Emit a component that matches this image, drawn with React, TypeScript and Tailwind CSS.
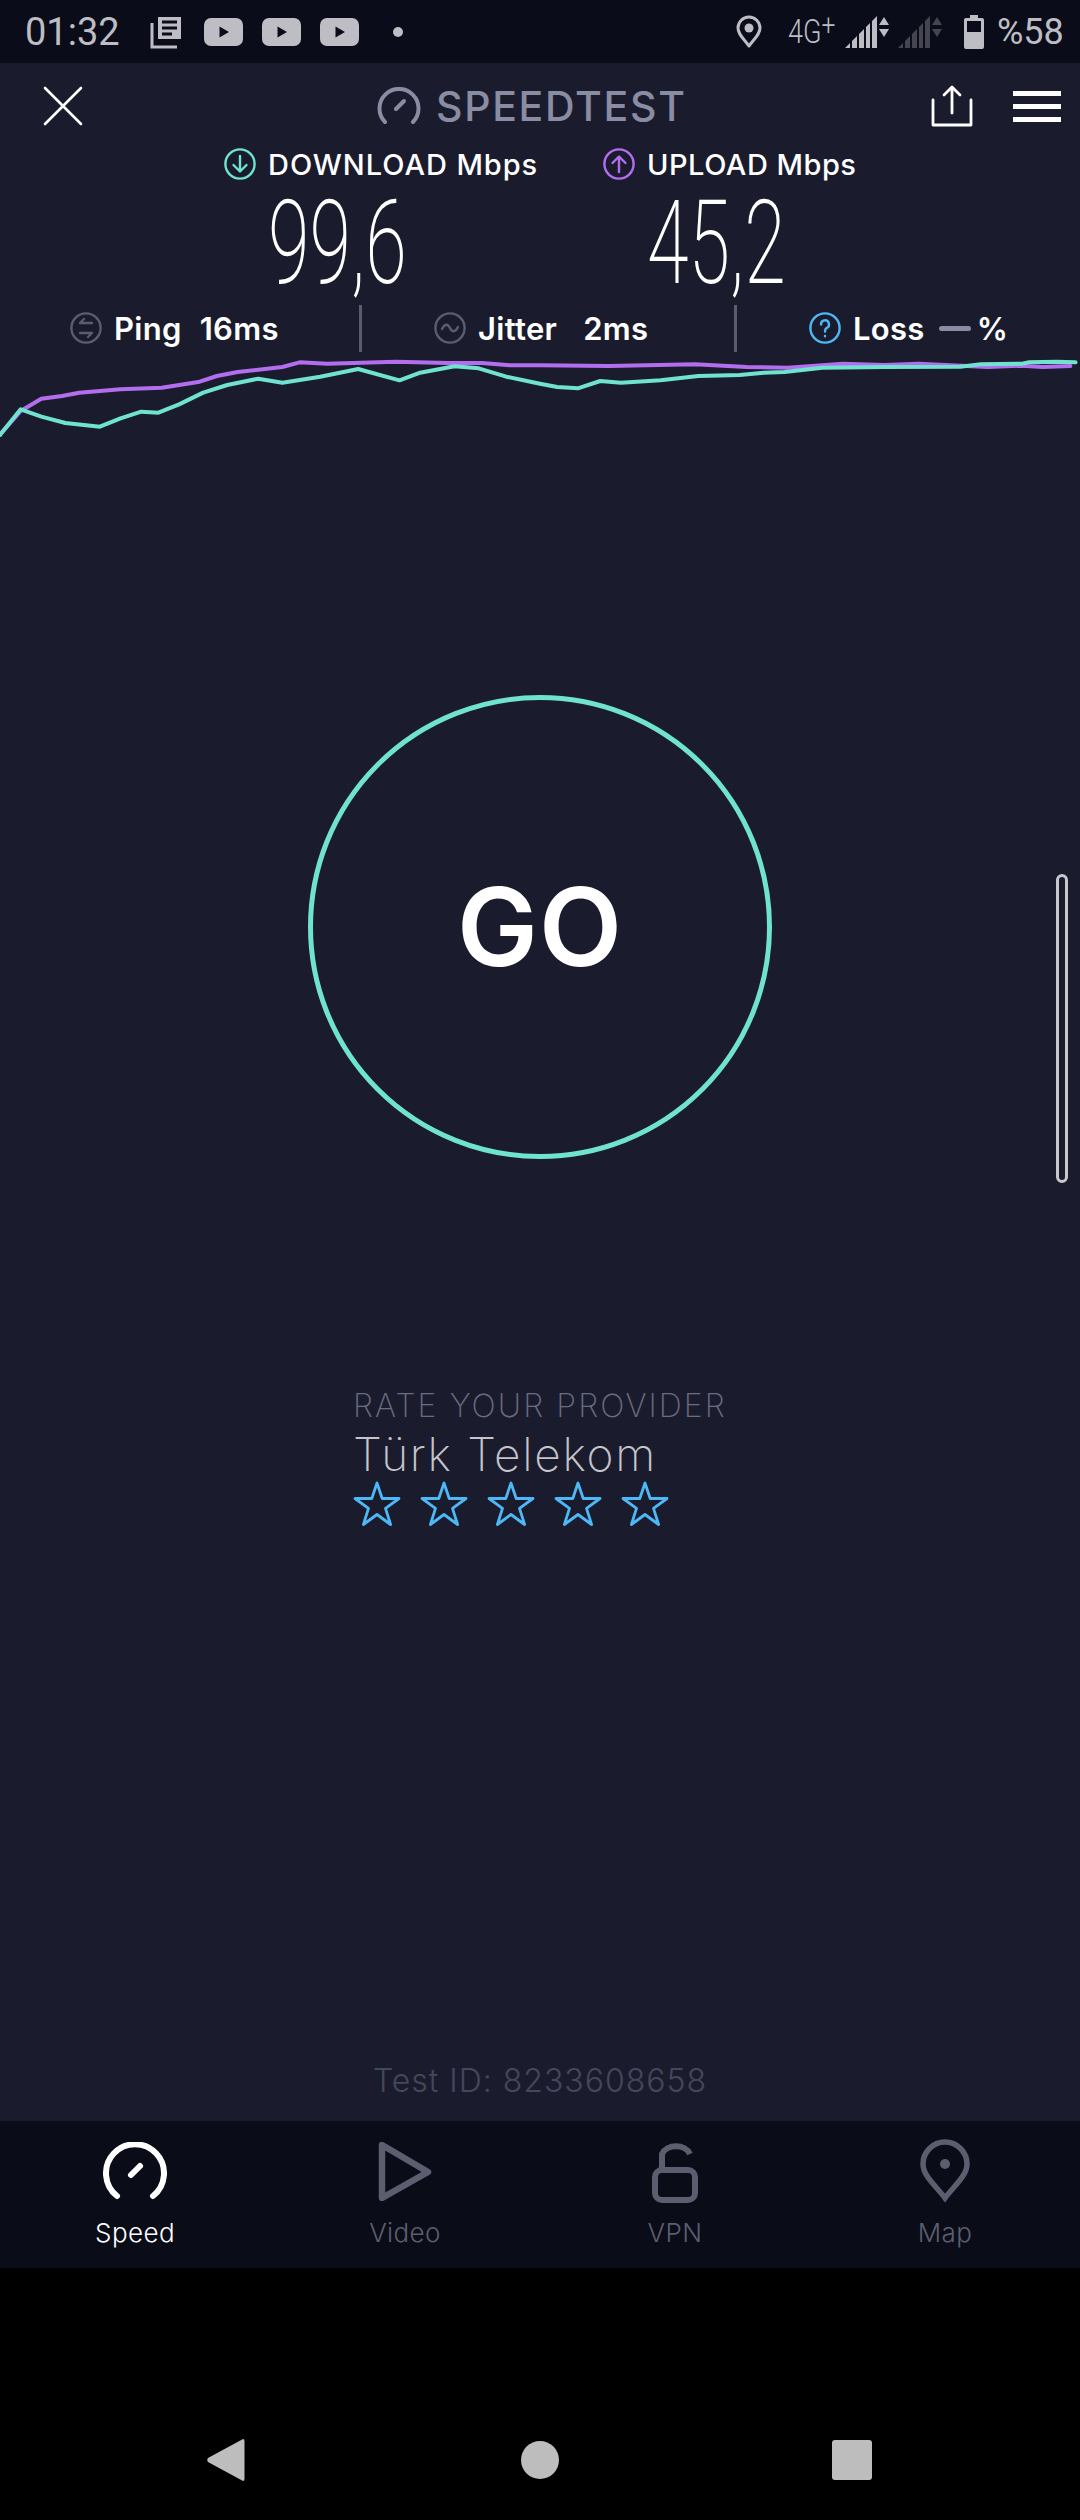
import React from "react";

const UI = "font-['Inter',sans-serif]";
const STATUS = "font-['Roboto',sans-serif]";

const downloadLine = "0,912 5,905 60,840 120,803 180,795 230,785 350,775 470,770 580,752 630,735 690,723 820,708 870,694 950,698 1150,692 1300,696 1400,696 1480,703 1568,703 1768,705 2018,700 2168,708 2288,710 2448,698 2568,702 2668,698 2868,708 2968,704 3028,708 3108,705";
const tealLine = "0,912 5,905 60,835 120,857 190,876 290,887 350,862 410,842 460,845 520,820 590,785 660,762 750,743 820,755 930,737 1040,714 1160,748 1220,725 1320,706 1390,712 1470,737 1568,758 1618,768 1678,772 1743,750 1803,755 1918,748 2028,735 2148,732 2218,725 2278,723 2388,710 2568,708 2788,707 2848,700 2968,698 2988,694 3068,692 3123,694";

function Youtube() {
  return (
    <svg width="39" height="28" viewBox="0 0 39 28" className="shrink-0">
      <rect width="39" height="28" rx="7" fill="#bdbdc3" />
      <path d="M15.5 8.5 L25 14 L15.5 19.5 Z" fill="#0a0c1a" />
    </svg>
  );
}

function Signal({ dim }: { dim?: boolean }) {
  const c = dim ? "#44454f" : "#bdbdc3";
  return (
    <svg width="45" height="34" viewBox="0 0 45 34" className="shrink-0">
      <path d="M0 33 L5 28 V33 Z M7 33 V26 L12 21 V33 Z M14 33 V19 L19 14 V33 Z M21 33 V12 L25 8 V33 Z M27 33 V6 L32 1 V33 Z" fill={c} />
      <path d="M39 2 L44 10 H34 Z M34 14 H44 L39 22 Z" fill={c} />
    </svg>
  );
}

function StatIcon({ color, children }: { color: string; children: React.ReactNode }) {
  return (
    <svg width="32" height="32" viewBox="0 0 32 32" fill="none" stroke={color} strokeWidth="2.4" strokeLinecap="round" strokeLinejoin="round" className="shrink-0">
      <circle cx="16" cy="16" r="14.6" />
      {children}
    </svg>
  );
}

function Star() {
  return (
    <svg width="48" height="46" viewBox="0 0 48 46" fill="none" stroke="#4db8f5" strokeWidth="2.8" strokeLinejoin="round" className="shrink-0">
      <path d="M24 2 L29.2 17.5 H46 L32.5 27.3 L37.6 43.5 L24 33.5 L10.4 43.5 L15.5 27.3 L2 17.5 H18.8 Z" />
    </svg>
  );
}

function Tab({ label, active, children }: { label: string; active?: boolean; children: React.ReactNode }) {
  return (
    <div className="flex flex-col items-center">
      <div className="h-[68px] flex items-center justify-center">{children}</div>
      <span className={`mt-[13px] text-[26px] leading-[30px] font-light tracking-[0.4px] ${active ? "text-white" : "text-[#5c5e70]"}`}>{label}</span>
    </div>
  );
}

export default function App() {
  return (
    <div className={`relative w-[1080px] h-[2520px] bg-black overflow-hidden ${UI}`}>
      {/* status bar */}
      <div className={`h-[63px] bg-[#0a0c1a] flex items-center text-[#bdbdc3] ${STATUS}`}>
        <span className="ml-[25px] w-[98px] text-[38px] leading-none">01:32</span>
        <svg width="33" height="34" viewBox="0 0 33 34" fill="none" className="ml-[27px] shrink-0">
          <path d="M8 2 H31 V24 H8 Z" fill="#bdbdc3" />
          <path d="M12 7 H27 M12 13 H27 M12 19 H22" stroke="#0a0c1a" strokeWidth="3" />
          <path d="M2 8 V32 H27" stroke="#bdbdc3" strokeWidth="3" />
        </svg>
        <div className="ml-[21px] flex gap-[19px]">
          <Youtube />
          <Youtube />
          <Youtube />
        </div>
        <div className="ml-[34px] w-[10px] h-[10px] rounded-full bg-[#bdbdc3]" />
        <svg width="26" height="34" viewBox="0 0 26 34" fill="none" className="ml-[333px] shrink-0">
          <path d="M13 31 C7 23 2 19 2 13 A11 11 0 0 1 24 13 C24 19 19 23 13 31 Z" stroke="#bdbdc3" strokeWidth="3" strokeLinejoin="round" />
          <circle cx="13" cy="13" r="4.5" fill="#bdbdc3" />
        </svg>
        <span className="ml-[26px] w-[57px] text-[33px] leading-none font-light scale-x-[0.82] origin-left whitespace-nowrap">
          4G<span className="relative -top-[8px] text-[30px]">+</span>
        </span>
        <Signal />
        <div className="ml-[8px]">
          <Signal dim />
        </div>
        <svg width="20" height="34" viewBox="0 0 20 34" className="ml-[21px] shrink-0">
          <path d="M6 0 H14 V3 H18 Q20 3 20 5 V32 Q20 34 18 34 H2 Q0 34 0 32 V5 Q0 3 2 3 H6 Z" fill="#bdbdc3" />
          <rect x="3" y="6" width="14" height="11" fill="#0a0c1a" />
        </svg>
        <span className="ml-[13px] text-[36px] leading-none">%58</span>
      </div>

      {/* main panel */}
      <div className="relative h-[2058px] bg-[#1a1c2e] flex flex-col">
        {/* header */}
        <div className="h-[86px] flex items-center">
          <svg width="40" height="40" viewBox="0 0 40 40" stroke="#ffffff" strokeWidth="2.6" strokeLinecap="round" className="ml-[43px] shrink-0">
            <path d="M2 2 L38 38 M38 2 L2 38" />
          </svg>
          <svg width="44" height="38" viewBox="0 0 44 38" fill="none" className="ml-[294px] shrink-0">
            <path d="M8 35 A19.5 19.5 0 1 1 36 35" stroke="#8a8ca3" strokeWidth="4" strokeLinecap="round" />
            <path d="M19 22 L27 14" stroke="#8a8ca3" strokeWidth="4" strokeLinecap="round" />
          </svg>
          <span className="ml-[15px] w-[252px] text-[41px] leading-none font-medium tracking-[1.7px] text-[#8a8ca3] whitespace-nowrap">SPEEDTEST</span>
          <svg width="42" height="42" viewBox="0 0 42 42" fill="none" stroke="#ffffff" strokeWidth="2.8" strokeLinecap="round" strokeLinejoin="round" className="ml-[243px] shrink-0">
            <path d="M2 15 V40 H40 V15 M21 28 V3 M13 10 L21 2 L29 10" />
          </svg>
          <div className="ml-[40px] w-[48px] flex flex-col gap-[8px]">
            <div className="h-[5px] bg-white" />
            <div className="h-[5px] bg-white" />
            <div className="h-[5px] bg-white" />
          </div>
        </div>

        {/* labels */}
        <div className="flex pl-[224px] h-[32px] -mt-[1px]">
          <div className="w-[379px] flex items-center">
            <StatIcon color="#6fe3d0">
              <path d="M16 8 V23 M9.5 17 L16 23.5 L22.5 17" />
            </StatIcon>
            <span className="ml-[12px] text-[29px] leading-none font-medium tracking-[0.95px] text-white whitespace-nowrap">DOWNLOAD Mbps</span>
          </div>
          <div className="flex items-center">
            <StatIcon color="#b36ef0">
              <path d="M16 24 V9 M9.5 15 L16 8.5 L22.5 15" />
            </StatIcon>
            <span className="ml-[12px] text-[29px] leading-none font-medium tracking-[0.5px] text-white whitespace-nowrap">UPLOAD Mbps</span>
          </div>
        </div>

        {/* numbers */}
        <div className={`flex pl-[268px] mt-[7px] h-[112px] items-center text-white ${STATUS}`}>
          <span className="w-[379px] text-[116px] leading-none font-extralight scale-x-[0.65] origin-left whitespace-nowrap">99,6</span>
          <span className="text-[116px] leading-none font-extralight scale-x-[0.65] origin-left whitespace-nowrap">45,2</span>
        </div>

        {/* ping jitter loss */}
        <div className="flex items-center h-[48px] mt-[5px] text-[31px] leading-none font-semibold tracking-[0.3px] text-white whitespace-nowrap">
          <div className="ml-[70px] w-[289px] flex items-center">
            <StatIcon color="#5b5c6e">
              <path d="M22 11 H10 L14 7 M10 21 H22 L18 25" />
            </StatIcon>
            <span className="ml-[12px]">Ping</span>
            <span className="ml-[18px]">16ms</span>
          </div>
          <div className="w-[3px] h-[47px] bg-[#5b5c6e]" />
          <div className="ml-[72px] w-[300px] flex items-center">
            <StatIcon color="#5b5c6e">
              <path d="M8 17 C11 11 14 12 16 16 C18 20 21 21 24 15" />
            </StatIcon>
            <span className="ml-[12px]">Jitter</span>
            <span className="ml-[26px]">2ms</span>
          </div>
          <div className="w-[3px] h-[47px] bg-[#5b5c6e]" />
          <div className="ml-[72px] flex items-center">
            <StatIcon color="#4db8f5">
              <path d="M12 12.5 A4 4 0 1 1 17.5 16 Q16 17 16 19.5 M16 24 V24.2" />
            </StatIcon>
            <span className="ml-[12px]">Loss</span>
            <div className="ml-[14px] w-[32px] h-[5px] rounded-full bg-[#8a8ca3]" />
            <span className="ml-[6px]">%</span>
          </div>
        </div>

        {/* speed graph */}
        <svg viewBox="0 660 3136 270" preserveAspectRatio="none" className="block w-[1080px] h-[90px] -mt-[1px] shrink-0" fill="none" strokeLinejoin="round" strokeLinecap="round">
          <polyline points={downloadLine} stroke="#b36ef0" strokeWidth="4" vectorEffect="non-scaling-stroke" />
          <polyline points={tealLine} stroke="#6fe3d0" strokeWidth="4" vectorEffect="non-scaling-stroke" />
        </svg>

        {/* go button */}
        <div className="mt-[254px] flex justify-center">
          <div className="w-[464px] h-[464px] rounded-full border-[5px] border-[#6fe3d0] flex items-center justify-center">
            <span className="text-[108px] leading-none font-semibold tracking-[1px] text-white">GO</span>
          </div>
        </div>

        {/* rate provider */}
        <div className="mt-[228px] ml-[353px] flex flex-col items-start">
          <span className="text-[32px] leading-[38px] font-extralight tracking-[2.1px] text-[#6a6c80] whitespace-nowrap">RATE YOUR PROVIDER</span>
          <span className="mt-[3px] text-[46px] leading-[52px] font-extralight tracking-[1.7px] text-[#c4c4ca] whitespace-nowrap">Türk Telekom</span>
          <div className="mt-[1px] flex gap-[19px]">
            <Star />
            <Star />
            <Star />
            <Star />
            <Star />
          </div>
        </div>

        <div className="mt-auto mb-[21px] text-center text-[32px] leading-[38px] font-light tracking-[1px] text-[#45475a]">Test ID: 8233608658</div>

        {/* scroll handle */}
        <div className="absolute left-[1056px] top-[811px] w-[12px] h-[309px] rounded-full border-[3px] border-[#c8c8cc]" />
      </div>

      {/* tabs */}
      <div className="h-[147px] bg-[#0a0c18] grid grid-cols-4 pt-[16px]">
        <Tab label="Speed" active>
          <svg width="64" height="58" viewBox="0 0 64 58" fill="none" stroke="#ffffff" strokeWidth="6" strokeLinecap="round">
            <path d="M14 54 A29 29 0 1 1 50 54" />
            <path d="M28 33 L37 24" />
          </svg>
        </Tab>
        <Tab label="Video">
          <svg width="54" height="60" viewBox="0 0 54 60" fill="none" stroke="#5c5e70" strokeWidth="6.5" strokeLinejoin="round">
            <path d="M4 4 L50 31 L4 57 Z" />
          </svg>
        </Tab>
        <Tab label="VPN">
          <svg width="46" height="64" viewBox="0 0 46 64" fill="none" stroke="#5c5e70" strokeWidth="6">
            <path d="M10 30 V15 A15 12 0 0 1 38 15" />
            <rect x="3" y="31" width="40" height="30" rx="7" />
          </svg>
        </Tab>
        <Tab label="Map">
          <svg width="50" height="64" viewBox="0 0 50 64" fill="none">
            <path d="M25 59 C16 47 3 37 3 25 A22 22 0 0 1 47 25 C47 37 34 47 25 59 Z" stroke="#5c5e70" strokeWidth="5.5" />
            <circle cx="25" cy="25" r="5" fill="#5c5e70" />
          </svg>
        </Tab>
      </div>

      {/* android nav */}
      <div className="h-[252px] flex items-start pt-[170px]">
        <svg width="38" height="44" viewBox="0 0 38 44" className="ml-[207px] shrink-0">
          <path d="M36 1 Q37.5 1 37.5 3 V41 Q37.5 43 36 43 L1 24 Q-0.5 22 1 20 Z" fill="#bdbdbd" />
        </svg>
        <div className="ml-[276px] w-[38px] h-[38px] mt-[3px] rounded-full bg-[#bdbdbd]" />
        <div className="ml-[273px] w-[40px] h-[40px] mt-[2px] rounded-[3px] bg-[#bdbdbd]" />
      </div>
    </div>
  );
}
